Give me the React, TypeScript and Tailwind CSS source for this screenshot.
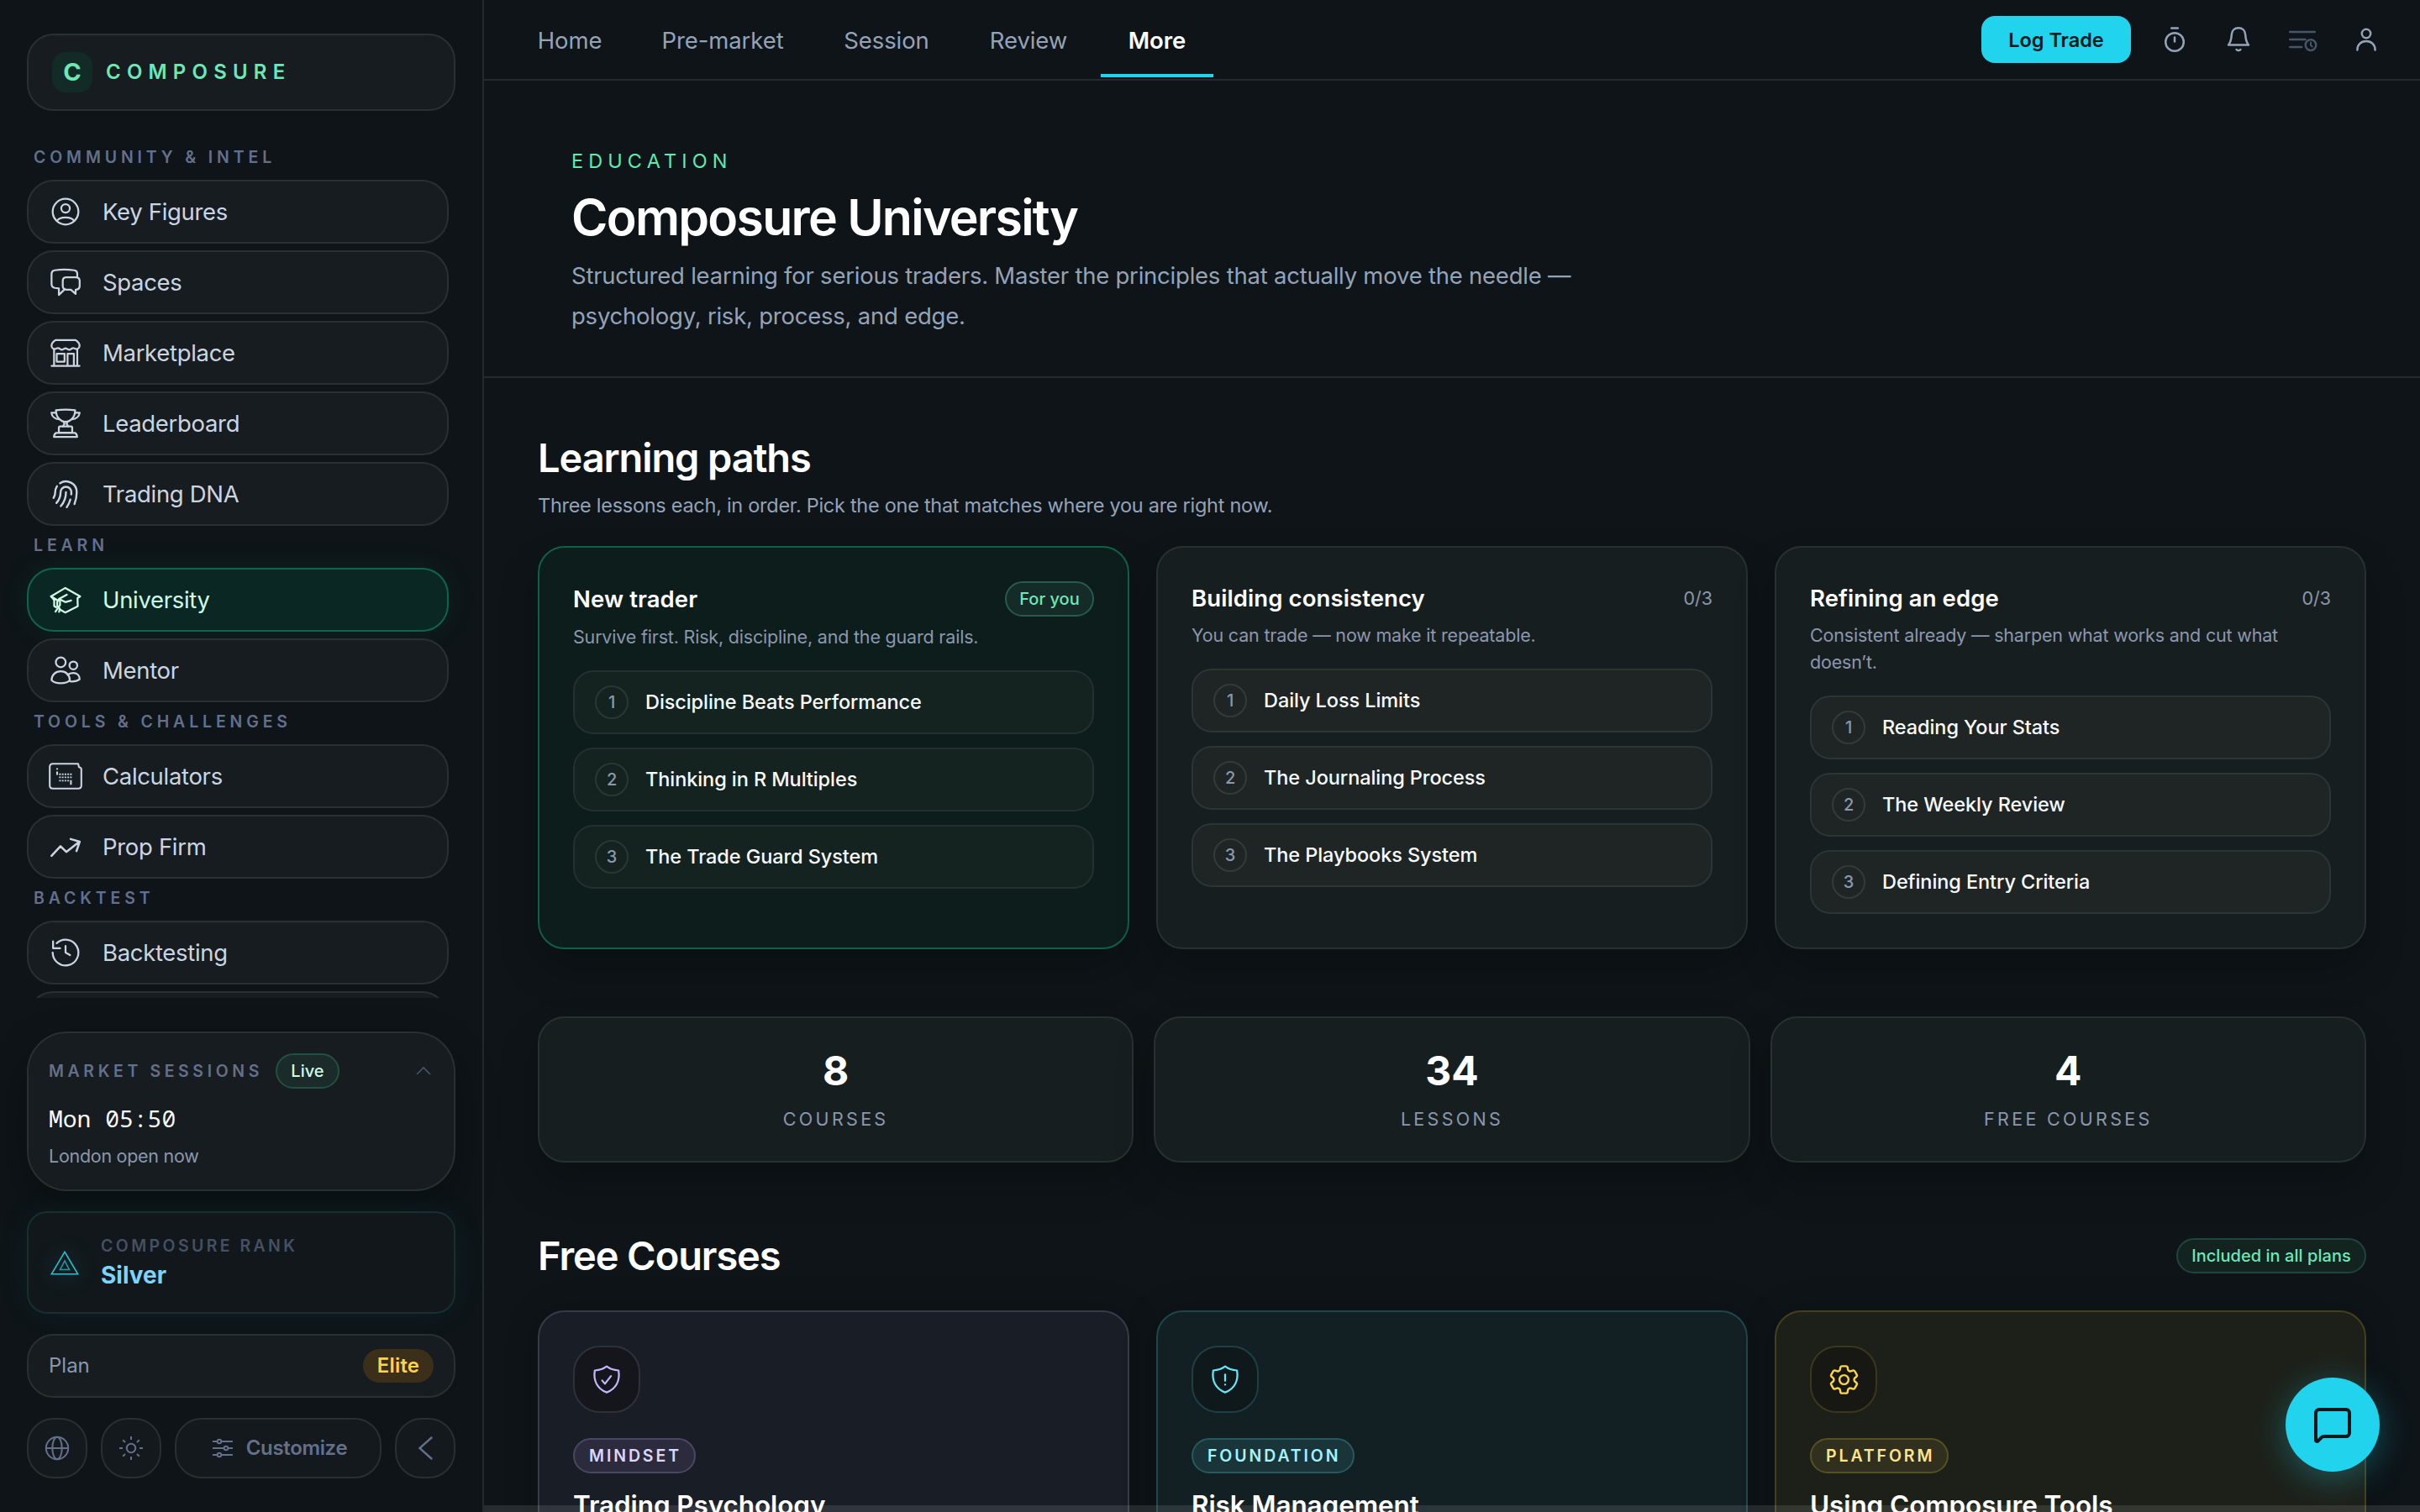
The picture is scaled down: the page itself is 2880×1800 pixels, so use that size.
import type { ReactNode } from "react";
import { MessageSquare } from "lucide-react";
import { HiOutlineCog6Tooth, HiOutlineFingerPrint } from "react-icons/hi2";
import clsx from "clsx";

type IconProps = { children: ReactNode; className?: string };

function NavIcon({ children, className }: IconProps) {
  return (
    <svg
      viewBox="0 0 24 24"
      className={clsx("size-9 shrink-0 overflow-visible", className)}
      fill="none"
      stroke="currentColor"
      strokeWidth={1.5}
      strokeLinecap="round"
      strokeLinejoin="round"
    >
      {children}
    </svg>
  );
}

function HeaderIcon({ children, className }: IconProps) {
  return (
    <button type="button" className={clsx("flex size-16 items-center justify-center", className)}>
      <svg
        viewBox="0 0 32 32"
        className="size-8 overflow-visible"
        fill="none"
        stroke="currentColor"
        strokeWidth={2.5}
        strokeLinecap="round"
        strokeLinejoin="round"
      >
        {children}
      </svg>
    </button>
  );
}

const SHIELD = "M12 1.8c-2.6 2-5.8 3-9.4 3.2C1.2 13 4.5 19.6 12 22.4 19.5 19.6 22.8 13 21.4 5 17.8 4.8 14.6 3.8 12 1.8z";

type NavItem = { label: string; icon: ReactNode; active?: boolean };

const sections: { title: string; items: NavItem[] }[] = [
  {
    title: "COMMUNITY & INTEL",
    items: [
      {
        label: "Key Figures",
        icon: (
          <NavIcon>
            <circle cx="12" cy="12" r="10.2" />
            <circle cx="12" cy="9.4" r="3.4" />
            <path d="M5.2 19.4C7.2 15.6 16.8 15.6 18.8 19.4" />
          </NavIcon>
        ),
      },
      {
        label: "Spaces",
        icon: (
          <NavIcon>
            <path d="M21.3 8V5.2c0-1.6-.9-2.5-2.4-2.7C14 1.8 8 1.8 3.4 2.5 1.9 2.7 1 3.6.9 5.2v8.3c0 1.7.9 2.7 2.7 3l3.1.4v5.2l4.3-4.2" />
            <path d="M12.3 8.1h7.9q2.8.1 3 2.6v4.6q-.2 2.3-2.7 2.6H20v3.4l-3.8-3.4h-3.6q-2.6-.2-2.8-2.6v-4.6q.2-2.5 2.5-2.6z" />
          </NavIcon>
        ),
      },
      {
        label: "Marketplace",
        icon: (
          <NavIcon>
            <path d="M4 1.9h16c2 1.3 3.2 3 3.1 4.6C23 8 21.8 9 20.6 9c-1.2 0-1.8-.8-2.6-.8S16 9.6 15 9.6 12.9 8.4 12 8.4 10 9.6 9 9.6 7.2 8.2 6 8.2C5.2 8.2 4.6 9 3.4 9 2.2 9 1 8 .9 6.5.8 4.9 2 3.2 4 1.9z" />
            <path d="M2.9 9v13.4M21.3 9v13.4M.9 22.4h22.2M5 12.8h6.2V19H5zM13.6 22.2v-9.4h5v9.4" />
          </NavIcon>
        ),
      },
      {
        label: "Leaderboard",
        icon: (
          <NavIcon>
            <path d="M4.4 1.6Q12 .7 19.6 1.6C19.6 7 16 10.6 12 10.8 8 10.6 4.4 7 4.4 1.6z" />
            <path d="M4.4 3.5H.8C1 6.3 3.6 8.4 7 8.8M19.6 3.5h3.6C23 6.3 20.4 8.4 17 8.8" />
            <path d="M10.5 10.8l.7 1.5-1.2 2M13.5 10.8l-.7 1.5 1.2 2" />
            <path d="M7.6 14.4h8.8q.9 0 .9 1v4H6.7v-4q0-1 .9-1zM4.6 19.6h14.8q1.6.6 1.8 3.2H2.8q.2-2.6 1.8-3.2z" />
          </NavIcon>
        ),
      },
      {
        label: "Trading DNA",
        icon: (
          <span className="flex size-9 shrink-0 items-center justify-center">
            <HiOutlineFingerPrint className="size-[41px] shrink-0" strokeWidth={1.4} />
          </span>
        ),
      },
    ],
  },
  {
    title: "LEARN",
    items: [
      {
        label: "University",
        active: true,
        icon: (
          <NavIcon>
            <path d="M3 12.2.5 9.3 11.8 2.6l11.8 6.7-2.1 1.4.2 6.4-9.9 5L8 20" />
            <path d="M.5 9.3l5.6 3.4M3 10.8V17l1.6 1" />
            <path d="M13 8 6.8 11.4l-1.4 2.2v2.6M6.8 11.4l5 2.5 4.6-1.3M7.6 12v4.2L4 21.4M5.4 16.8l2 2.2-.5 2.6" />
          </NavIcon>
        ),
      },
      {
        label: "Mentor",
        icon: (
          <NavIcon>
            <circle cx="8.2" cy="5.6" r="3.9" />
            <circle cx="18.2" cy="8.1" r="3.1" />
            <path d="M.9 19.8C1 15.6 4 12.8 8.2 12.8s7.1 2.8 7.2 7c-1.7 1.8-4.2 2.4-7.2 2.4S2.6 21.6.9 19.8z" />
            <path d="M13.6 15.6c1.2-1 2.8-1.5 4.4-1.5 3 0 5.1 1.8 5.2 5-1.8 1.5-4.6 2-7.8 1.7" />
          </NavIcon>
        ),
      },
    ],
  },
  {
    title: "TOOLS & CHALLENGES",
    items: [
      {
        label: "Calculators",
        icon: (
          <svg viewBox="0 0 40 32" className="-mx-0.5 h-8 w-10 shrink-0" fill="none" stroke="currentColor" strokeWidth={2.1}>
            <path d="M35 1.2H5Q1.2 1.2 1.2 5v22q0 3.8 3.8 3.8h30q3.8 0 3.8-3.8V8q0-2.4-2.8-2.8L35 1.2z" strokeLinejoin="round" />
            <path d="M10 6.4v1.9M10 10.4v4.2M26.4 20.8v5.4" />
            <path d="M12.4 13.8h15M12.4 17.4h15M12.4 21.4h12" strokeDasharray="2 1.25" strokeWidth={1.9} />
          </svg>
        ),
      },
      {
        label: "Prop Firm",
        icon: (
          <NavIcon>
            <path d="M.9 19.2 8 11.6l4.6 4.5L23 8M16.1 5.9 23.2 8l-2.5 7.4" strokeWidth={1.7} />
          </NavIcon>
        ),
      },
    ],
  },
  {
    title: "BACKTEST",
    items: [
      {
        label: "Backtesting",
        icon: (
          <NavIcon>
            <path d="M1.8 12A10.2 10.2 0 1 0 5 4.6M2.1 3v5.6h5.6M12 6.8V12l3.6 2" />
          </NavIcon>
        ),
      },
      { label: "Replay", icon: <NavIcon>{null}</NavIcon> },
    ],
  },
];

const tabs = [
  { label: "Home", width: "w-[140px]" },
  { label: "Pre-market", width: "w-[208px]" },
  { label: "Session", width: "w-[166px]" },
  { label: "Review", width: "w-[156px]" },
  { label: "More", width: "w-[134px]", active: true },
];

const paths = [
  {
    title: "New trader",
    desc: "Survive first. Risk, discipline, and the guard rails.",
    forYou: true,
    lessons: ["Discipline Beats Performance", "Thinking in R Multiples", "The Trade Guard System"],
  },
  {
    title: "Building consistency",
    desc: "You can trade — now make it repeatable.",
    lessons: ["Daily Loss Limits", "The Journaling Process", "The Playbooks System"],
  },
  {
    title: "Refining an edge",
    desc: "Consistent already — sharpen what works and cut what doesn’t.",
    lessons: ["Reading Your Stats", "The Weekly Review", "Defining Entry Criteria"],
  },
];

const stats = [
  { value: "8", label: "COURSES" },
  { value: "34", label: "LESSONS" },
  { value: "4", label: "FREE COURSES" },
];

const courses = [
  {
    tag: "MINDSET",
    title: "Trading Psychology",
    card: "border-[#383a4a] bg-[#191d26]",
    tile: "border-[#2f303b] bg-[#14161b] text-[#c4b5fd]",
    chip: "border-[#4a4765] bg-[#2b2b3d] text-[#ddd6fe]",
    icon: (
      <NavIcon>
        <path d={SHIELD} />
        <path d="M8.4 12.9l2.2 2.7 4.8-6.2" />
      </NavIcon>
    ),
  },
  {
    tag: "FOUNDATION",
    title: "Risk Management",
    card: "border-[#1f4648] bg-[#122024]",
    tile: "border-[#1f3f41] bg-[#0f181a] text-[#67e8f9]",
    chip: "border-[#265a5f] bg-[#1a3539] text-[#a5f3fc]",
    icon: (
      <NavIcon>
        <path d={SHIELD} />
        <path d="M12 8.2v5M12 16.2v.1" />
      </NavIcon>
    ),
  },
  {
    tag: "PLATFORM",
    title: "Using Composure Tools",
    card: "border-[#463f1e] bg-[#1d2019]",
    tile: "border-[#3a371d] bg-[#171814] text-[#fcd34d]",
    chip: "border-[#575022] bg-[#312f1d] text-[#fde68a]",
    icon: <HiOutlineCog6Tooth className="size-[43px] shrink-0" strokeWidth={1.35} />,
  },
];

function Sidebar() {
  return (
    <aside className="flex w-[576px] shrink-0 flex-col border-r-2 border-[#24292c] px-8 py-10">
      <div className="flex h-23 w-[510px] shrink-0 items-center gap-4 rounded-[32px] border-2 border-[#293031] bg-[#161c1f] px-7">
        <span className="flex size-12 items-center justify-center rounded-2xl bg-[#132b27] text-[29px] font-bold text-[#6ee7b7]">
          C
        </span>
        <span className="text-[24px] font-semibold tracking-[7.2px] text-[#6ee7b7]">COMPOSURE</span>
      </div>

      <nav className="mt-8 flex h-[1024px] w-[502px] shrink-0 flex-col [clip-path:inset(-20px_-40px_0_-40px)]">
        {sections.map((section) => (
          <div key={section.title} className="shrink-0">
            <p className="pt-2 pb-3 pl-2 text-[19.5px] leading-[30px] font-semibold tracking-[4.85px] text-[#64708b]">
              {section.title}
            </p>
            <div className="flex flex-col gap-2">
              {section.items.map((item) => (
                <a
                  key={item.label}
                  className={clsx(
                    "flex h-19 items-center gap-[26px] rounded-[32px] border-2 px-[26px] text-[27.5px] tracking-[-0.32px]",
                    item.active
                      ? "border-[#10644c] bg-[#0b2723] text-[#d1fae5] shadow-[0_0_36px_rgba(16,185,129,0.09)]"
                      : "border-[#2a3031] bg-[#161c1f] text-[#cbd5e1]"
                  )}
                >
                  {item.icon}
                  <span className="pt-0.5">{item.label}</span>
                </a>
              ))}
            </div>
          </div>
        ))}
      </nav>

      <div className="mt-10 flex w-[510px] flex-col gap-6">
        <div className="rounded-[48px] border-2 border-[#2a3031] bg-[#161c1f] p-6 shadow-[0_20px_50px_rgba(0,0,0,0.3)]">
          <div className="flex items-center">
            <span className="pt-px text-[19.5px] font-semibold tracking-[4.6px] text-[#64708b]">MARKET SESSIONS</span>
            <span className="ml-[15px] flex h-[42px] w-19 items-center justify-center rounded-full border-2 border-[#23503f] bg-[#1a2b29] text-[20px] font-medium text-[#d1fae5]">
              Live
            </span>
            <svg viewBox="0 0 24 24" className="ml-auto size-6" fill="none" stroke="#475569" strokeWidth={1.6}>
              <path d="M4 16l8-8 8 8" />
            </svg>
          </div>
          <p className="mt-[15px] font-['Noto_Sans_Mono','Liberation_Mono',monospace] text-[28px] leading-10 text-[#f8fafc]">
            Mon 05:50
          </p>
          <p className="mt-[9px] text-[21.5px] leading-8 tracking-[-0.28px] text-[#8b97ad]">London open now</p>
        </div>

        <div className="flex h-[122px] items-center rounded-[24px] border-2 border-[#16302f] bg-[#11171a] px-[26px] shadow-[0_0_40px_rgba(20,184,166,0.07)]">
          <svg
            viewBox="0 0 34 29"
            className="h-[29px] w-[34px] shrink-0 overflow-visible drop-shadow-[0_0_14px_rgba(34,211,238,0.45)]"
            fill="none"
            stroke="#2cc0d4"
            strokeWidth={1.6}
          >
            <path d="M17 1.4 1.4 27.7h31.2z" />
            <path d="M17 12 11.6 22.5h10.8z" strokeOpacity={0.75} />
          </svg>
          <div className="ml-[26px] pt-px">
            <p className="text-[19.5px] leading-7 font-semibold tracking-[3.4px] text-[#465063]">COMPOSURE RANK</p>
            <p className="mt-px text-[28px] leading-10 font-bold text-[#7dd3fc]">Silver</p>
          </div>
        </div>

        <div className="flex h-19 items-center justify-between rounded-[32px] border-2 border-[#2a3031] bg-[#161c1f] px-6">
          <span className="text-[24px] text-[#8b97ad]">Plan</span>
          <span className="flex h-10 w-21 items-center justify-center rounded-full bg-[#3c2f19] text-[24px] font-semibold tracking-[0.2px] text-[#fcd34d]">
            Elite
          </span>
        </div>

        <div className="flex gap-4 text-[#64708b]">
          <button type="button" className="flex size-18 items-center justify-center rounded-[32px] border-2 border-[#2a3031] bg-[#13191c]">
            <svg viewBox="0 0 28 28" className="size-7 overflow-visible" fill="none" stroke="currentColor" strokeWidth={2}>
              <circle cx="14" cy="14" r="13.2" />
              <ellipse cx="14" cy="14" rx="5.7" ry="13.2" />
              <path d="M.8 14h26.4" />
            </svg>
          </button>
          <button type="button" className="flex size-18 items-center justify-center rounded-[32px] border-2 border-[#2a3031] bg-[#13191c]">
            <svg viewBox="0 0 28 28" className="size-7 overflow-visible" fill="none" stroke="currentColor" strokeWidth={2}>
              <circle cx="14" cy="14" r="5.2" />
              <path d="M14 0v4M14 24v4M0 14h4M24 14h4M4.2 4.2 7 7M21 21l2.8 2.8M4.2 23.8 7 21M21 7l2.8-2.8" />
            </svg>
          </button>
          <button
            type="button"
            className="flex h-18 w-[246px] items-center justify-center gap-4 rounded-[32px] border-2 border-[#2a3031] bg-[#13191c] pl-1 text-[24px] font-semibold tracking-[-0.35px]"
          >
            <svg viewBox="0 0 24 24" className="size-6 overflow-visible" fill="none" stroke="currentColor" strokeWidth={2}>
              <path d="M0 4h5.6M10.4 4H24M0 12h13.6M18.4 12H24M0 20h5.6M10.4 20H24" />
              <circle cx="8" cy="4" r="2.3" />
              <circle cx="16" cy="12" r="2.3" />
              <circle cx="8" cy="20" r="2.3" />
            </svg>
            Customize
          </button>
          <button type="button" className="flex size-18 items-center justify-center rounded-[32px] border-2 border-[#2a3031] bg-[#13191c]">
            <svg viewBox="0 0 28 28" className="size-7" fill="none" stroke="currentColor" strokeWidth={2.4} strokeLinecap="round">
              <path d="M21.5 1.5 7.5 14l14 12.5" />
            </svg>
          </button>
        </div>
      </div>
    </aside>
  );
}

function Header() {
  return (
    <header className="flex h-24 shrink-0 items-center border-b-2 border-[#24292c] px-8">
      <nav className="flex h-full gap-2">
        {tabs.map((tab) => (
          <a
            key={tab.label}
            className={clsx(
              "flex h-23 items-center justify-center border-b-4 pt-2.5 text-[27.5px]",
              tab.width,
              tab.active
                ? "border-[#22d3ee] font-semibold text-white"
                : "border-transparent tracking-[-0.08px] text-[#94a3b8]"
            )}
          >
            {tab.label}
          </a>
        ))}
      </nav>
      <div className="ml-auto flex items-center gap-3 text-[#94a3b8]">
        <button
          type="button"
          className="mr-2 h-14 w-[178px] rounded-2xl bg-[#22d3ee] pt-0.5 text-[23.5px] font-semibold text-[#07191d]"
        >
          Log Trade
        </button>
        <HeaderIcon>
          <circle cx="16" cy="19" r="10.8" />
          <path d="M12.2 2.4h7.6M16 13.4v5" />
        </HeaderIcon>
        <HeaderIcon>
          <path d="M16 2.2c-4.6 0-8 3-8.2 8-.2 4.6-.8 8.4-3.8 12.4h24c-3-4-3.6-7.8-3.8-12.4-.2-5-3.6-8-8.2-8z" />
          <path d="M13.6 28a2.9 2.4 0 0 0 4.8 0" />
        </HeaderIcon>
        <HeaderIcon className="text-[#475569]">
          <path d="M1.2 7h29.6M1.2 16h18.4M1.2 25h14" />
          <circle cx="26" cy="22.6" r="6.3" />
          <path d="M26 19.4v3.4l1.8 1.8" strokeWidth={2} />
        </HeaderIcon>
        <HeaderIcon>
          <circle cx="16" cy="9" r="5.2" />
          <path d="M5.4 28.4C5.4 22.4 9.8 18 16 18s10.6 4.4 10.6 10.4" />
        </HeaderIcon>
      </div>
    </header>
  );
}

export default function App() {
  return (
    <div className="flex h-[1800px] w-[2880px] overflow-hidden bg-[#0e1418] font-['Inter','Liberation_Sans',sans-serif]">
      <Sidebar />

      <div className="relative flex min-w-0 flex-1 flex-col">
        <Header />

        <main className="min-h-0 flex-1 overflow-hidden">
          <section className="h-[354px] border-b-2 border-[#24292c] pt-[76px] pl-26">
            <p className="text-[23.5px] leading-10 tracking-[6.1px] text-[#5eeab0]">EDUCATION</p>
            <h1 className="mt-3 text-[59px] leading-[70px] font-semibold tracking-[-1.75px] text-white">
              Composure University
            </h1>
            <p className="mt-2.5 w-[1240px] text-[27.5px] leading-12 tracking-[-0.23px] text-[#94a3b8]">
              Structured learning for serious traders. Master the principles that actually move the needle — psychology,
              risk, process, and edge.
            </p>
          </section>

          <div className="px-16">
            <h2 className="mt-16 text-[47px] leading-[62px] font-semibold tracking-[-1.1px] text-white">Learning paths</h2>
            <p className="mt-2 text-[23.5px] leading-9 tracking-[-0.28px] text-[#94a3b8]">
              Three lessons each, in order. Pick the one that matches where you are right now.
            </p>

            <div className="mt-[30px] grid h-[480px] grid-cols-3 gap-8">
              {paths.map((path) => (
                <article
                  key={path.title}
                  className={clsx(
                    "rounded-[32px] border-2 p-10 shadow-[0_24px_48px_rgba(0,0,0,0.22)]",
                    path.forYou ? "border-[#0f5f49] bg-[#0d1d1b]" : "border-[#2a3031] bg-[#171e20]"
                  )}
                >
                  <div className="flex items-center justify-between">
                    <h3 className="pt-px text-[27.5px] leading-[39px] font-semibold tracking-[0.1px] text-white">{path.title}</h3>
                    {path.forYou ? (
                      <span className="flex h-[42px] w-[106px] items-center justify-center rounded-full border-2 border-[#275c4b] bg-[#152b27] text-[20px] font-medium text-[#6ee7b7]">
                        For you
                      </span>
                    ) : (
                      <span className="text-[21.5px] text-[#8b97ad]">0/3</span>
                    )}
                  </div>
                  <p className="mt-2 text-[21.5px] leading-8 tracking-[-0.19px] text-[#8b97ad]">{path.desc}</p>
                  <ol className="mt-6 flex flex-col gap-4">
                    {path.lessons.map((lesson, i) => (
                      <li
                        key={lesson}
                        className={clsx(
                          "flex h-19 items-center gap-5 rounded-[24px] border-2 px-6 text-[23.5px] font-medium tracking-[-0.08px] text-[#f8fafc]",
                          path.forYou ? "border-[#23312e] bg-[#152320]" : "border-[#2d3434] bg-[#1f2525]"
                        )}
                      >
                        <span
                          className={clsx(
                            "flex size-10 items-center justify-center rounded-full border-2 text-[20px] text-[#8b97ad]",
                            path.forYou ? "border-[#2a3834]" : "border-[#333a3a]"
                          )}
                        >
                          {i + 1}
                        </span>
                        {lesson}
                      </li>
                    ))}
                  </ol>
                </article>
              ))}
            </div>

            <div className="mt-20 grid grid-cols-3 gap-6">
              {stats.map((stat) => (
                <div
                  key={stat.label}
                  className="flex h-[174px] flex-col items-center rounded-[32px] border-2 border-[#2a3031] bg-[#171e20] pt-[31px] shadow-[0_24px_48px_rgba(0,0,0,0.22)]"
                >
                  <p className="text-[48px] leading-16 font-bold text-white">{stat.value}</p>
                  <p className="mt-[9px] text-[21.5px] leading-8 tracking-[3.3px] text-[#8b97ad]">{stat.label}</p>
                </div>
              ))}
            </div>

            <div className="mt-20 flex h-[62px] items-center justify-between">
              <h2 className="text-[47px] font-semibold tracking-[-1.1px] text-white">Free Courses</h2>
              <span className="flex h-[42px] w-[226px] items-center justify-center rounded-full border-2 border-[#1f463c] bg-[#132320] text-[20px] font-medium tracking-[0.05px] text-[#6ee7b7]">
                Included in all plans
              </span>
            </div>

            <div className="mt-[34px] grid grid-cols-3 gap-8">
              {courses.map((course) => (
                <article
                  key={course.tag}
                  className={clsx("h-[480px] rounded-[32px] border-2 p-10 shadow-[0_0_40px_rgba(0,0,0,0.2)]", course.card)}
                >
                  <div className={clsx("flex size-20 items-center justify-center rounded-[32px] border-2", course.tile)}>
                    {course.icon}
                  </div>
                  <span
                    className={clsx(
                      "mt-[30px] flex h-[42px] w-fit items-center rounded-full border-2 pt-px pr-[15px] pl-[17px] text-[19.5px] font-semibold tracking-[2.9px]",
                      course.chip
                    )}
                  >
                    {course.tag}
                  </span>
                  <h3 className="mt-3.5 text-[31.5px] leading-12 font-semibold tracking-[-0.1px] text-white">{course.title}</h3>
                </article>
              ))}
            </div>
          </div>
        </main>

        <div className="absolute inset-x-0 bottom-0 h-2 bg-white/10" />
        <button
          type="button"
          className="absolute right-12 bottom-12 flex size-28 items-center justify-center rounded-full bg-[#22d3ee] text-[#0e171c] shadow-[0_8px_40px_rgba(34,211,238,0.32)]"
        >
          <MessageSquare size={48} strokeWidth={2} />
        </button>
      </div>
    </div>
  );
}
